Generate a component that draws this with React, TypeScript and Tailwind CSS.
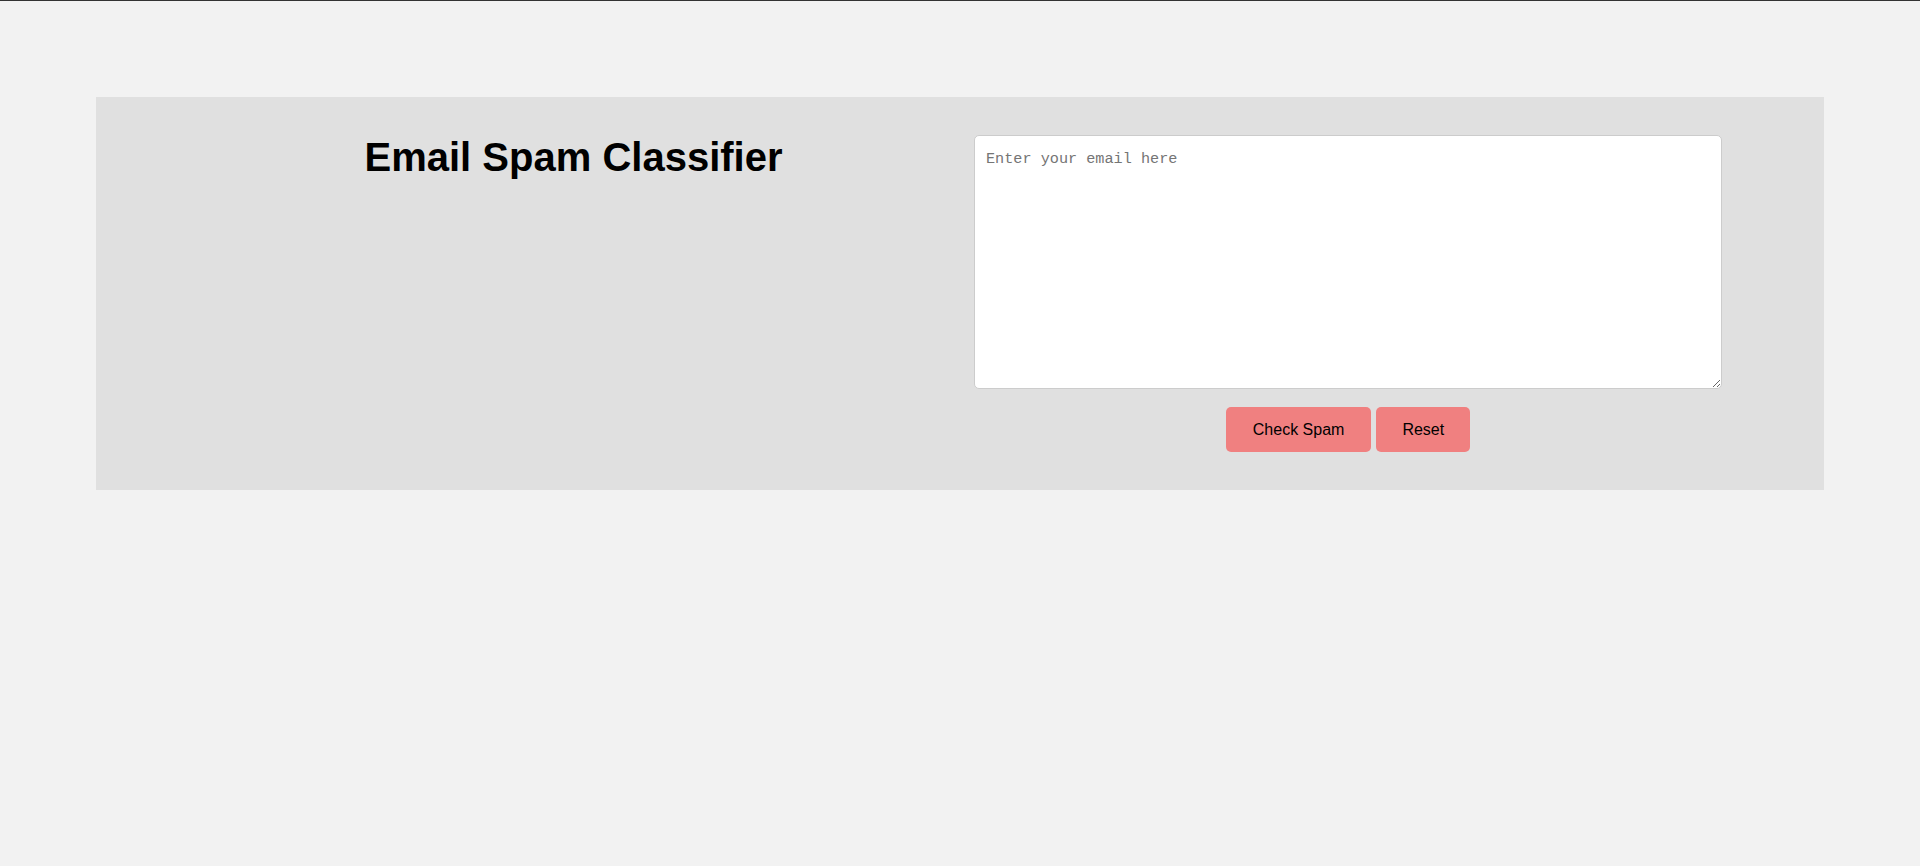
import { useState } from 'react';

export default function App() {
  const [text, setText] = useState('');

  return (
    <div className="min-h-screen bg-[#f2f2f2] border-t border-[#333333] pt-[96px] font-['Liberation_Sans',Arial,sans-serif]">
      <div className="mx-[96px] bg-[#e0e0e0] px-[102px] pt-[38px] pb-[38px] flex gap-[25px]">
        <div className="w-[751px] shrink-0 flex justify-center">
          <h1 className="text-[40px] font-bold text-black leading-[44.7px] m-0">Email Spam Classifier</h1>
        </div>
        <div className="flex-1 flex flex-col items-center">
          <textarea
            value={text}
            onChange={(e) => setText(e.target.value)}
            placeholder="Enter your email here"
            className="w-full h-[254px] bg-white border border-[#cccccc] rounded-[5px] px-[11px] pt-[12px] pb-[10px] text-[15.2px] font-['Liberation_Mono',monospace] placeholder:text-[#757575] outline-none resize"
          />
          <div className="mt-[18px] flex gap-[5px]">
            <button className="h-[45px] px-[27px] bg-[#f08080] rounded-[5px] text-[16px] text-black">Check Spam</button>
            <button onClick={() => setText('')} className="h-[45px] px-[26px] bg-[#f08080] rounded-[5px] text-[16px] text-black">
              Reset
            </button>
          </div>
        </div>
      </div>
    </div>
  );
}
